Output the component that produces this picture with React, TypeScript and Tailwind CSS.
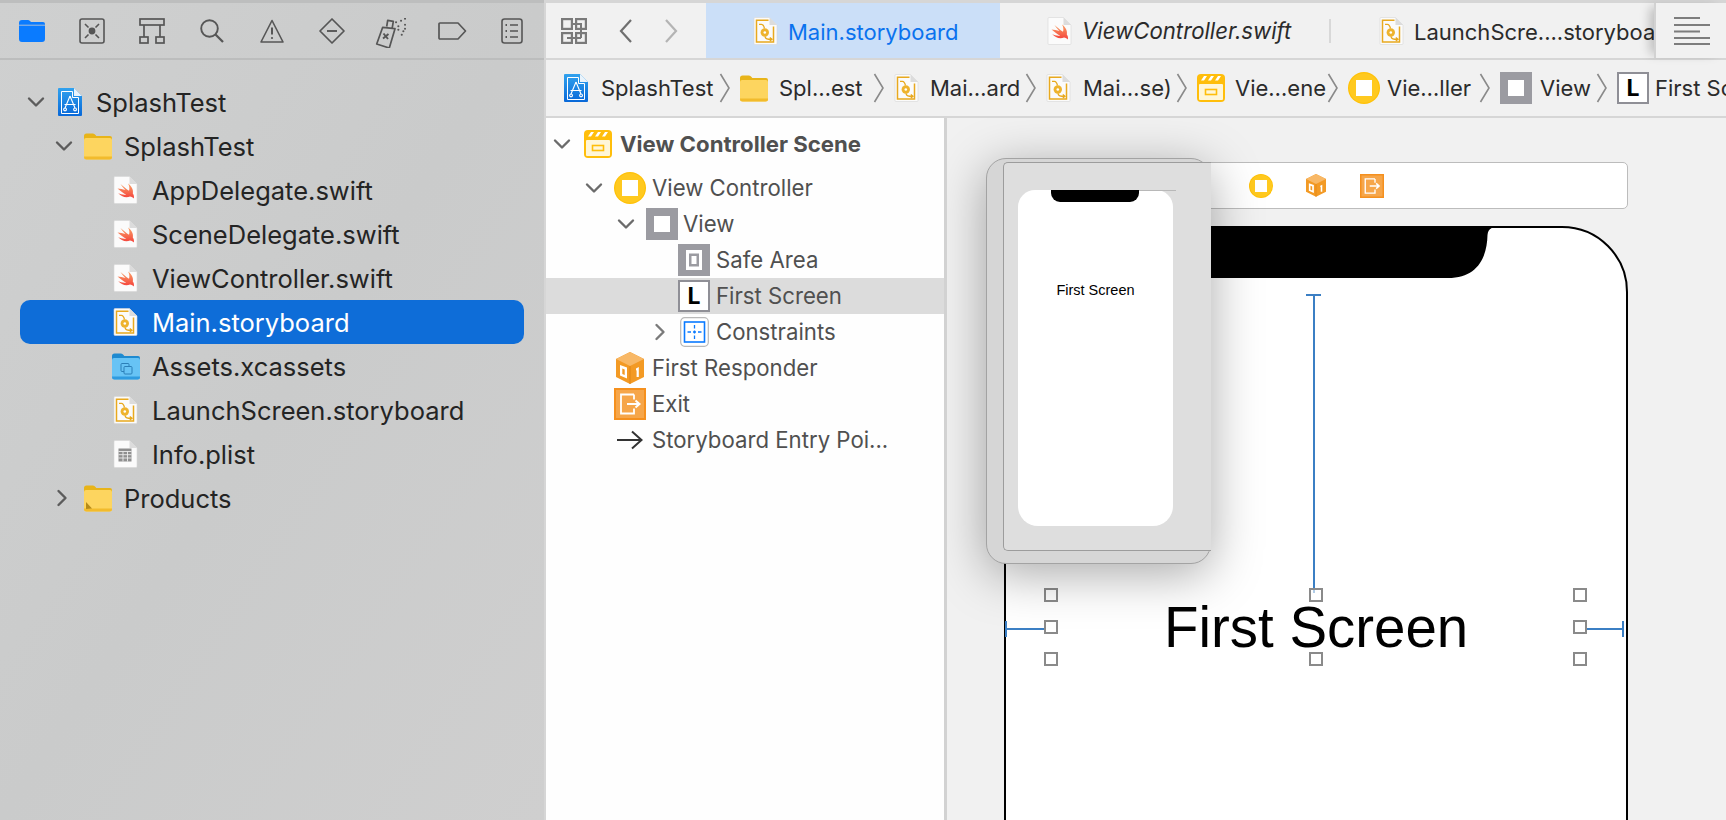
import React from "react";

const Chevron = ({ dir = "down", c = "#5c5c5c" }: { dir?: "down" | "right"; c?: string }) =>
  dir === "down" ? (
    <svg width="20" height="14" viewBox="0 0 20 14" fill="none"><path d="M3 3.5 L10 10.5 L17 3.5" stroke={c} strokeWidth="2.4" strokeLinecap="round" strokeLinejoin="round" /></svg>
  ) : (
    <svg width="20" height="20" viewBox="0 0 20 20" fill="none"><path d="M6.5 3 L13.5 10 L6.5 17" stroke={c} strokeWidth="2.4" strokeLinecap="round" strokeLinejoin="round" /></svg>
  );

const DocShape = () => (
  <>
    <path d="M1 1.5 Q1 .5 2 .5 H16.5 L24 8 V26.5 Q24 27.5 23 27.5 H2 Q1 27.5 1 26.5 Z" fill="#fbfbfb" stroke="#d6d6d6" strokeWidth=".6" />
    <path d="M16.5 .5 V8 H24 Z" fill="#dcdcdc" />
  </>
);

const SwiftDoc = () => (
  <svg width="25" height="28" viewBox="0 0 25 28" className="shrink-0">
    <defs><linearGradient id="sw" x1="0" y1="0" x2="0" y2="1"><stop offset="0" stopColor="#f9a468" /><stop offset="1" stopColor="#f5403a" /></linearGradient></defs>
    <DocShape />
    <path d="M4.5 12.5 C8 15.5 11 17.7 13.2 18.5 C10.6 19.1 7.6 18.3 5.2 17.1 C8 20.5 13 22.5 17 20.5 C18.6 20.7 20 21.5 20.8 22.5 C21.3 20.7 20.8 18.9 19.8 17.5 C20.6 14.1 18.8 10.1 15 7.5 C16.4 9.9 16.8 12.5 16 14.7 C13 12.7 9.6 9.7 7.4 7.9 C9 10.3 10.8 12.3 12.4 13.9 C9.8 13.3 7 12.5 4.5 12.5 Z" fill="url(#sw)" />
  </svg>
);

const StoryDoc = () => (
  <svg width="25" height="28" viewBox="0 0 25 28" className="shrink-0">
    <DocShape />
    <path d="M15.5 3.2 H3.5 V25 H20.5 V9.5" fill="none" stroke="#e8a91f" strokeWidth="1.5" />
    <path d="M6 7.3 H8.5 C10.5 7.3 11 9.5 11.5 11.5" fill="none" stroke="#e8a91f" strokeWidth="1.3" />
    <circle cx="11.8" cy="15.5" r="4.2" fill="#eeb32d" />
    <circle cx="11.8" cy="15.5" r="1.3" fill="#fff" />
    <path d="M12 19.5 C12.5 22 14 22.3 19 22.3 M16.8 20.4 L19 22.3 L16.8 24" fill="none" stroke="#e8a91f" strokeWidth="1.3" />
  </svg>
);

const PlistDoc = () => (
  <svg width="25" height="28" viewBox="0 0 25 28" className="shrink-0">
    <DocShape />
    <rect x="5.5" y="8.5" width="13" height="13" fill="#8f8f8f" />
    <path d="M5.5 11.5 H18.5 M5.5 14.7 H18.5 M5.5 18 H18.5 M10 11.5 V21.5 M14.5 11.5 V21.5" stroke="#ececec" strokeWidth=".9" />
  </svg>
);

const ProjectIcon = () => (
  <svg width="24" height="28" viewBox="0 0 24 28" className="shrink-0">
    <defs><linearGradient id="pr" x1="0" y1="0" x2="0" y2="1"><stop offset="0" stopColor="#31a2ee" /><stop offset="1" stopColor="#0868d8" /></linearGradient></defs>
    <path d="M1 0 H16 L24 8 V27 Q24 28 23 28 H1 Q0 28 0 27 V1 Q0 0 1 0 Z" fill="url(#pr)" />
    <path d="M16 0 V8 H24 Z" fill="#e9f3fb" />
    <path d="M3.5 3.5 H14.5 V9.5 H20.5 V25.5 H3.5 Z" fill="none" stroke="#fff" strokeWidth="1" />
    <path d="M12 8 L7 20 M12 8 L17 20 M6.5 16.5 H17.5 M7 20 a1.4 1.4 0 1 0 .1 0 M17 20 a1.4 1.4 0 1 0 .1 0" fill="none" stroke="#fff" strokeWidth="1.1" />
  </svg>
);

const Folder = ({ alias = false }: { alias?: boolean }) => (
  <svg width="28" height="27" viewBox="0 0 28 27" className="shrink-0">
    <path d="M0 3 Q0 .5 2.5 .5 H9 Q10.5 .5 11.5 2 L12.3 3 H26 Q28 3 28 5 V10 H0 Z" fill="#e8b419" />
    <path d="M0 7 Q0 5 2 5 H26 Q28 5 28 7 V24 Q28 26.5 25.5 26.5 H2.5 Q0 26.5 0 24 Z" fill="#fdd55f" />
    <path d="M0 23.5 H28 V24 Q28 26.5 25.5 26.5 H2.5 Q0 26.5 0 24 Z" fill="#f2bb2c" />
    {alias && <path d="M2 24 L2 17 L8 23.5 Z" fill="#b58a17" />}
  </svg>
);

const AssetFolder = () => (
  <svg width="28" height="27" viewBox="0 0 28 27" className="shrink-0">
    <path d="M0 3 Q0 .5 2.5 .5 H9 Q10.5 .5 11.5 2 L12.3 3 H26 Q28 3 28 5 V10 H0 Z" fill="#1e8ad0" />
    <path d="M0 7 Q0 5 2 5 H26 Q28 5 28 7 V24 Q28 26.5 25.5 26.5 H2.5 Q0 26.5 0 24 Z" fill="#67c3f5" />
    <path d="M0 23.5 H28 V24 Q28 26.5 25.5 26.5 H2.5 Q0 26.5 0 24 Z" fill="#2f9be0" />
    <rect x="9" y="10.5" width="8" height="8" rx="1" fill="none" stroke="#2b7fb8" strokeWidth="1" />
    <rect x="12" y="13.5" width="8" height="7.5" rx="1" fill="#67c3f5" stroke="#2b7fb8" strokeWidth="1" />
  </svg>
);

const SceneIcon = () => (
  <svg width="28" height="28" viewBox="0 0 28 28" className="shrink-0">
    <rect width="28" height="28" rx="4" fill="#ffbe0b" />
    <rect x="2" y="10" width="24" height="16" rx="1" fill="#fff6d8" />
    <path d="M4 6.5 L7 2 H10 L7 6.5 Z M11 6.5 L14 2 H17 L14 6.5 Z M18 6.5 L21 2 H24 L21 6.5 Z" fill="#fff" />
    <rect x="8.5" y="15.5" width="11" height="5" fill="none" stroke="#ffbe0b" strokeWidth="1.6" />
  </svg>
);

const VCIcon = ({ small = false }: { small?: boolean }) => (
  <svg width={small ? 24 : 32} height={small ? 24 : 32} viewBox="0 0 32 32" className="shrink-0">
    <circle cx="16" cy="16" r="16" fill="#ffc107" />
    <circle cx="16" cy="16" r="14.8" fill="#ffc91f" />
    <rect x="8" y="8" width="16" height="16" fill="#fff" />
  </svg>
);

const ViewIcon = () => (
  <svg width="32" height="32" viewBox="0 0 32 32" className="shrink-0">
    <rect width="32" height="32" fill="#9b9ba1" />
    <rect x="8" y="8" width="16" height="16" fill="#fff" />
  </svg>
);

const SafeIcon = () => (
  <svg width="32" height="32" viewBox="0 0 32 32" className="shrink-0">
    <rect width="32" height="32" fill="#9b9ba1" />
    <rect x="8" y="6" width="16" height="20" fill="#fff" />
    <rect x="11" y="9.5" width="10" height="13" fill="#9b9ba1" />
    <rect x="13.5" y="12" width="5" height="8" fill="#fff" />
  </svg>
);

const LIcon = () => (
  <span className="w-[32px] h-[32px] shrink-0 bg-white border-2 border-[#8f8f96] flex items-center justify-center text-[23px] leading-none font-bold text-black font-['Inter',sans-serif]">L</span>
);

const ConstraintIcon = () => (
  <svg width="29" height="30" viewBox="0 0 29 30" className="shrink-0">
    <rect x=".7" y=".7" width="27.6" height="28.6" rx="4" fill="#fff" stroke="#b9b9b9" strokeWidth="1.2" />
    <rect x="4.5" y="5" width="20" height="20" fill="none" stroke="#0a7aff" strokeWidth="1.6" />
    <path d="M14.5 8 V11.5 M14.5 13.5 V16.5 M14.5 18.5 V22 M7.5 15 H11 M13 15 H16 M18 15 H21.5" stroke="#0a7aff" strokeWidth="1.3" />
  </svg>
);

const Cube = ({ s = 28 }: { s?: number }) => (
  <svg width={s} height={(s * 32) / 28} viewBox="0 0 28 32" className="shrink-0">
    <path d="M14 0 L28 7 V25 L14 32 L0 25 V7 Z" fill="#f39a24" />
    <path d="M14 0 L28 7 L14 14 L0 7 Z" fill="#f8b866" />
    <path d="M14 14 V32" stroke="#e08414" strokeWidth="1" />
    <path d="M4 13 L11 15.5 V26.5 L4 23.5 Z M6.3 16.5 V22 L8.7 23 V17.5 Z" fill="#fff" fillRule="evenodd" />
    <path d="M20 16.5 L22.8 15 V25 H20.6 V18.2 L20 18.5 Z" fill="#fff" />
  </svg>
);

const ExitIcon = ({ s = 32 }: { s?: number }) => (
  <svg width={s} height={s} viewBox="0 0 32 32" className="shrink-0">
    <rect width="32" height="32" fill="#f5901e" />
    <rect x="2" y="2" width="28" height="28" fill="#f6a64a" />
    <path d="M20 6.5 H7 V25.5 H20 V20.5 M20 11.5 V6.5" fill="none" stroke="#fff" strokeWidth="1.8" />
    <path d="M13 16 H25 M21.5 12.5 L25.5 16 L21.5 19.5" fill="none" stroke="#fff" strokeWidth="2" />
  </svg>
);

const EntryArrow = () => (
  <svg width="26" height="22" viewBox="0 0 26 22" className="shrink-0">
    <path d="M0 11 H24 M15 2.5 L24.5 11 L15 19.5" fill="none" stroke="#333" strokeWidth="2" />
  </svg>
);

const stroke = "#565656";
const NavIcons = [
  <svg key="1" width="26" height="22" viewBox="0 0 26 22"><path d="M0 3 Q0 0 3 0 H9 Q10 0 11 1 L12 2 H24 Q26 2 26 4 V19 Q26 22 23 22 H3 Q0 22 0 19 Z" fill="#0a7bff" /><path d="M0 5.2 H26" stroke="#cfd0d0" strokeWidth=".8" /></svg>,
  <svg key="2" width="26" height="26" viewBox="0 0 26 26" fill="none" stroke={stroke} strokeWidth="1.6"><rect x="1" y="1" width="24" height="24" rx="2" /><circle cx="13" cy="13" r="2.6" fill={stroke} /><path d="M6 6 L9.5 9.5 M20 6 L16.5 9.5 M6 20 L9.5 16.5 M20 20 L16.5 16.5" /></svg>,
  <svg key="3" width="26" height="26" viewBox="0 0 26 26" fill="none" stroke={stroke} strokeWidth="1.7"><rect x="1" y="1" width="24" height="6" /><rect x="1" y="19" width="8" height="6" /><rect x="17" y="19" width="8" height="6" /><path d="M5 7 V19 M21 7 V19" /></svg>,
  <svg key="4" width="24" height="24" viewBox="0 0 24 24" fill="none" stroke={stroke} strokeWidth="1.9"><circle cx="9.5" cy="9.5" r="8.3" /><path d="M15.5 15.5 L23 23" strokeWidth="2.3" /></svg>,
  <svg key="5" width="24" height="24" viewBox="0 0 24 24" fill="none" stroke={stroke} strokeWidth="1.6"><path d="M12 1.5 L23 23 H1 Z" strokeLinejoin="round" /><path d="M12 8.5 V15.5" strokeWidth="2" /><circle cx="12" cy="19" r="1.1" fill={stroke} stroke="none" /></svg>,
  <svg key="6" width="26" height="26" viewBox="0 0 26 26" fill="none" stroke={stroke} strokeWidth="1.7"><path d="M13 1 L25 13 L13 25 L1 13 Z" strokeLinejoin="round" /><path d="M8 13 H18" strokeWidth="1.9" /></svg>,
  <svg key="7" width="31" height="30" viewBox="0 0 31 30" fill="none" stroke={stroke} strokeWidth="1.7" className="-ml-[3px] mt-[4px]"><path d="M11.7 8.5 L12.7 2.3 L18.3 3.3 L17.3 9.6 M7.7 9.3 L20 10.7 L14.3 30 L1.7 26 Z" strokeLinejoin="round" /><path d="M8.5 15.5 L13 21 M13.5 16 L8 20.5" strokeWidth="1.9" /><path d="M21 4.3 h.1 M26 2.7 h.1 M30 .7 h.1 M23.3 8.3 h.1 M30 6.7 h.1 M23.3 11.7 h.1 M28.3 13.3 h.1 M30 10.7 h.1 M26.7 16.7 h.1" strokeWidth="2" strokeLinecap="round" /></svg>,
  <svg key="8" width="29" height="18" viewBox="0 0 29 18" fill="none" stroke={stroke} strokeWidth="1.7"><path d="M2 1 H20 L27.5 9 L20 17 H2 Q1 17 1 16 V2 Q1 1 2 1 Z" strokeLinejoin="round" /></svg>,
  <svg key="9" width="22" height="26" viewBox="0 0 22 26" fill="none" stroke={stroke} strokeWidth="1.6"><rect x="1" y="1" width="20" height="24" rx="2.5" /><path d="M9 7 H17 M9 13 H17 M9 19 H17" /><path d="M4.5 7 H6 M4.5 13 H6 M4.5 19 H6" strokeWidth="2" /></svg>,
];

const TreeRow = ({ slot, pad, chev, icon, gap, text, selected = false }: { slot: string; pad: string; chev?: React.ReactNode; icon: React.ReactNode; gap: string; text: string; selected?: boolean }) => (
  <div className={`flex items-center h-[44px] rounded-[10px] ${selected ? "bg-[#0e6dd8] text-white" : "text-[#242424]"}`}>
    <div className={`${slot} ${pad} flex items-center shrink-0`}>{chev}</div>
    <div className={`${gap} flex items-center shrink-0`}>{icon}</div>
    <span className="text-[25.5px] leading-none whitespace-nowrap pt-[2px]">{text}</span>
  </div>
);

const Crumb = ({ icon, text, iw, tw, last = false }: { icon: React.ReactNode; text: string; iw: string; tw: string; last?: boolean }) => (
  <div className="flex items-center shrink-0">
    <div className={`${iw} flex items-center shrink-0`}>{icon}</div>
    <span className={`${tw} text-[22px] leading-none whitespace-nowrap text-[#2b2b2b]`}>{text}</span>
    {!last && (
      <svg width="14" height="32" viewBox="0 0 14 32" className="shrink-0 mr-[8px]" fill="none"><path d="M2.5 2 L11 16 L2.5 30" stroke="#8a8a8a" strokeWidth="1.6" /></svg>
    )}
  </div>
);

const OutRow = ({ slot, chev, iconSlot, icon, text, active = false }: { slot: string; chev?: React.ReactNode; iconSlot: string; icon: React.ReactNode; text: string; active?: boolean }) => (
  <div className={`flex items-center h-[36px] ${active ? "bg-[#dcdcdc]" : ""}`}>
    <div className={`${slot} flex items-center shrink-0`}>{chev}</div>
    <div className={`${iconSlot} flex items-center shrink-0`}>{icon}</div>
    <span className="text-[22.2px] leading-none whitespace-nowrap text-[#505050] pt-[1px]">{text}</span>
  </div>
);

const Handle = ({ pos }: { pos: string }) => (
  <div className={`absolute ${pos} w-[14px] h-[14px] bg-white/60 border-2 border-[#8a8a8a]`} />
);

export default function App() {
  return (
    <div className="w-[1726px] h-[820px] overflow-hidden flex font-['Inter',sans-serif] bg-[#f1f1f1]">
      {/* Navigator */}
      <aside className="w-[546px] shrink-0 h-full bg-gradient-to-br from-[#cfd0d0] via-[#cacbcb] to-[#cfcfcf] border-r-[2px] border-[#d6d6d6] flex flex-col">
        <div className="h-[60px] shrink-0 border-t-[3px] border-b-[2px] border-t-[#bdbebe] border-b-[#bcbdbd] flex items-center pl-[2px]">
          {NavIcons.map((ic) => (
            <div key={ic.key} className="w-[60px] flex items-center justify-center">{ic}</div>
          ))}
        </div>
        <div className="pt-[20px] pl-[20px] w-[524px]">
          <TreeRow slot="w-[38px]" pad="pl-[6px]" chev={<Chevron />} icon={<ProjectIcon />} gap="w-[38px]" text="SplashTest" />
          <TreeRow slot="w-[64px]" pad="pl-[34px]" chev={<Chevron />} icon={<Folder />} gap="w-[40px]" text="SplashTest" />
          <TreeRow slot="w-[93px]" pad="" icon={<SwiftDoc />} gap="w-[39px]" text="AppDelegate.swift" />
          <TreeRow slot="w-[93px]" pad="" icon={<SwiftDoc />} gap="w-[39px]" text="SceneDelegate.swift" />
          <TreeRow slot="w-[93px]" pad="" icon={<SwiftDoc />} gap="w-[39px]" text="ViewController.swift" />
          <TreeRow slot="w-[93px]" pad="" icon={<StoryDoc />} gap="w-[39px]" text="Main.storyboard" selected />
          <TreeRow slot="w-[92px]" pad="" icon={<AssetFolder />} gap="w-[40px]" text="Assets.xcassets" />
          <TreeRow slot="w-[93px]" pad="" icon={<StoryDoc />} gap="w-[39px]" text="LaunchScreen.storyboard" />
          <TreeRow slot="w-[93px]" pad="" icon={<PlistDoc />} gap="w-[39px]" text="Info.plist" />
          <TreeRow slot="w-[64px]" pad="pl-[32px]" chev={<Chevron dir="right" />} icon={<Folder alias />} gap="w-[40px]" text="Products" />
        </div>
      </aside>

      {/* Editor */}
      <main className="flex-1 min-w-0 h-full flex flex-col">
        {/* Tabs */}
        <div className="h-[60px] shrink-0 border-t-[3px] border-b-[2px] border-[#d6d6d6] flex items-stretch bg-[#f1f1f1]">
          <div className="w-[160px] shrink-0 flex items-center pl-[15px]">
            <svg width="26" height="26" viewBox="0 0 26 26" fill="none" stroke="#7a7a7a" strokeWidth="2.2">
              <rect x="1.1" y="1.1" width="9.8" height="9.8" />
              <rect x="15.1" y="1.1" width="9.8" height="9.8" />
              <rect x="1.1" y="15.1" width="9.8" height="9.8" />
              <rect x="15.1" y="15.1" width="9.8" height="9.8" />
              <path d="M10 6 H20 V20 M6 20 H20" strokeWidth="2" />
            </svg>
            <svg width="16" height="26" viewBox="0 0 16 26" fill="none" className="ml-[31px]"><path d="M13 2 L3 13 L13 24" stroke="#6f6f6f" strokeWidth="2.2" /></svg>
            <svg width="16" height="26" viewBox="0 0 16 26" fill="none" className="ml-[29px]"><path d="M3 2 L13 13 L3 24" stroke="#b4b4b4" strokeWidth="2.2" /></svg>
          </div>
          <div className="w-[294px] shrink-0 bg-[#cbdff8] flex items-center pl-[47px]">
            <StoryDoc />
            <span className="ml-[10px] text-[22px] leading-none text-[#0a72ee] whitespace-nowrap pt-[2px]">Main.storyboard</span>
          </div>
          <div className="w-[331px] shrink-0 flex items-center pl-[47px] relative">
            <SwiftDoc />
            <span className="ml-[10px] text-[22.2px] leading-none italic text-[#2b2b2b] whitespace-nowrap pt-[2px]">ViewController.swift</span>
            <span className="absolute right-0 top-[16px] h-[24px] w-[2px] bg-[#d8d8d8]" />
          </div>
          <div className="w-[323px] shrink-0 flex items-center pl-[48px] overflow-hidden">
            <StoryDoc />
            <span className="ml-[10px] text-[22px] leading-none text-[#2b2b2b] whitespace-nowrap pt-[2px]">LaunchScre....storyboard</span>
          </div>
          <div className="flex-1 relative border-l-[2px] border-[#d2d2d2] flex items-center pl-[18px] shadow-[-8px_0_10px_-4px_rgba(0,0,0,0.22)] bg-[#f1f1f1]">
            <svg width="36" height="28" viewBox="0 0 36 28" fill="none"><path d="M0 1 H26 M0 8 H36 M0 14.5 H26 M0 21 H36 M0 27 H36" stroke="#7d7d7d" strokeWidth="1.8" /></svg>
          </div>
        </div>

        {/* Breadcrumb */}
        <div className="h-[58px] shrink-0 border-b-[2px] border-[#d6d6d6] flex items-center pl-[18px] overflow-hidden">
          <Crumb icon={<ProjectIcon />} text="SplashTest" iw="w-[37px]" tw="w-[117px]" />
          <Crumb icon={<Folder />} text="Spl…est" iw="w-[39px]" tw="w-[93px]" />
          <Crumb icon={<StoryDoc />} text="Mai…ard" iw="w-[36px]" tw="w-[94px]" />
          <Crumb icon={<StoryDoc />} text="Mai…se)" iw="w-[37px]" tw="w-[92px]" />
          <Crumb icon={<SceneIcon />} text="Vie…ene" iw="w-[38px]" tw="w-[90.5px]" />
          <Crumb icon={<VCIcon />} text="Vie…ller" iw="w-[39.5px]" tw="w-[91px]" />
          <Crumb icon={<ViewIcon />} text="View" iw="w-[40px]" tw="w-[55px]" />
          <Crumb icon={<LIcon />} text="First Screen" iw="w-[38px]" tw="w-[140px]" last />
        </div>

        <div className="flex-1 min-h-0 flex">
          {/* Outline */}
          <div className="w-[398px] shrink-0 h-full bg-[#fefefe] border-r-[3px] border-[#d2d2d2] box-content pt-[8px]">
            <div className="flex items-center h-[36px]">
              <div className="w-[38px] pl-[6px] flex items-center shrink-0"><Chevron c="#6b6b6b" /></div>
              <div className="w-[36px] flex items-center shrink-0"><SceneIcon /></div>
              <span className="text-[22.2px] leading-none font-bold whitespace-nowrap text-[#505050] pt-[1px]">View Controller Scene</span>
            </div>
            <div className="h-[8px]" />
            <OutRow slot="w-[68px] pl-[38px]" chev={<Chevron c="#6b6b6b" />} iconSlot="w-[38px]" icon={<VCIcon />} text="View Controller" />
            <OutRow slot="w-[100px] pl-[70px]" chev={<Chevron c="#6b6b6b" />} iconSlot="w-[37px]" icon={<ViewIcon />} text="View" />
            <OutRow slot="w-[132px]" iconSlot="w-[38px]" icon={<SafeIcon />} text="Safe Area" />
            <OutRow slot="w-[132px]" iconSlot="w-[38px]" icon={<LIcon />} text="First Screen" active />
            <OutRow slot="w-[134px] pl-[104px]" chev={<Chevron dir="right" c="#7a7a7a" />} iconSlot="w-[36px]" icon={<ConstraintIcon />} text="Constraints" />
            <OutRow slot="w-[70px]" iconSlot="w-[36px]" icon={<Cube />} text="First Responder" />
            <OutRow slot="w-[68px]" iconSlot="w-[38px]" icon={<ExitIcon />} text="Exit" />
            <OutRow slot="w-[71px]" iconSlot="w-[35px]" icon={<EntryArrow />} text="Storyboard Entry Poi..." />
          </div>

          {/* Canvas: free placement of storyboard items */}
          <div className="flex-1 relative overflow-hidden bg-[#f1f1f1]">
            {/* scene bar */}
            <div className="absolute left-[57px] top-[44px] w-[624px] h-[47px] bg-white border-[1.5px] border-[#bcbcbc] rounded-[5px]">
              <div className="absolute left-[243.5px] top-[10.5px]"><VCIcon small /></div>
              <div className="absolute left-[301px] top-[11px]"><Cube s={20} /></div>
              <div className="absolute left-[354.5px] top-[10.5px]"><ExitIcon s={24} /></div>
            </div>

            {/* device */}
            <div className="absolute left-[57px] top-[108px] w-[624px] h-[640px] bg-white border-2 border-black rounded-tl-[66px] rounded-tr-[66px] overflow-hidden">
              <svg width="362" height="51" viewBox="0 0 362 51" className="absolute left-[130px] top-[-1px]">
                <path d="M0 0 H362 C354 0 352 3 351.5 8 C351 30 342 51 312 51 H50 C20 51 11 30 10.5 8 C10 3 8 0 0 0 Z" fill="#000" />
              </svg>
            </div>

            {/* constraints */}
            <div className="absolute left-[366px] top-[177px] w-[2px] h-[298px] bg-[#3b7fc4]" />
            <div className="absolute left-[359px] top-[176px] w-[15px] h-[2px] bg-[#3b7fc4]" />
            <div className="absolute left-[58px] top-[510px] w-[40px] h-[2px] bg-[#3b7fc4]" />
            <div className="absolute left-[58px] top-[503px] w-[2px] h-[16px] bg-[#3b7fc4]" />
            <div className="absolute left-[639px] top-[510px] w-[37px] h-[2px] bg-[#3b7fc4]" />
            <div className="absolute left-[675px] top-[503px] w-[2px] h-[16px] bg-[#3b7fc4]" />

            {/* label */}
            <div className="absolute left-[217px] top-[476px] text-[58px] leading-[66px] text-black whitespace-nowrap font-['Liberation_Sans',sans-serif] origin-left scale-x-[0.973]">First Screen</div>
            <Handle pos="left-[97px] top-[470px]" />
            <Handle pos="left-[362px] top-[470px]" />
            <Handle pos="left-[626px] top-[470px]" />
            <Handle pos="left-[97px] top-[502px]" />
            <Handle pos="left-[626px] top-[502px]" />
            <Handle pos="left-[97px] top-[534px]" />
            <Handle pos="left-[362px] top-[534px]" />
            <Handle pos="left-[626px] top-[534px]" />

            {/* drag preview */}
            <div className="absolute left-[39px] top-[40px] w-[225px] h-[406px] rounded-[20px] bg-[#d6d6d6] border-[1.5px] border-[#a3a3a3] shadow-[0_10px_50px_rgba(0,0,0,0.34)]">
              <div className="absolute left-[16px] top-[3px] w-[208px] h-[389px] bg-[#dedede] border-l-[1.5px] border-y-[1.5px] border-[#9c9c9c] rounded-l-[5px]">
                <div className="absolute left-[14px] top-[27px] w-[155px] h-[336px] bg-white rounded-t-[17px] rounded-b-[20px]">
                  <div className="absolute left-[33px] top-0 w-[88px] h-[12px] bg-black rounded-b-[9px]" />
                  <div className="absolute left-0 top-[90px] w-full text-center text-[14.5px] leading-[20px] text-black font-['Liberation_Sans',sans-serif]">First Screen</div>
                </div>
                <div className="absolute left-[135px] top-[27px] w-[37px] h-px bg-[#b8b8b8]" />
              </div>
            </div>
          </div>
        </div>
      </main>
    </div>
  );
}
